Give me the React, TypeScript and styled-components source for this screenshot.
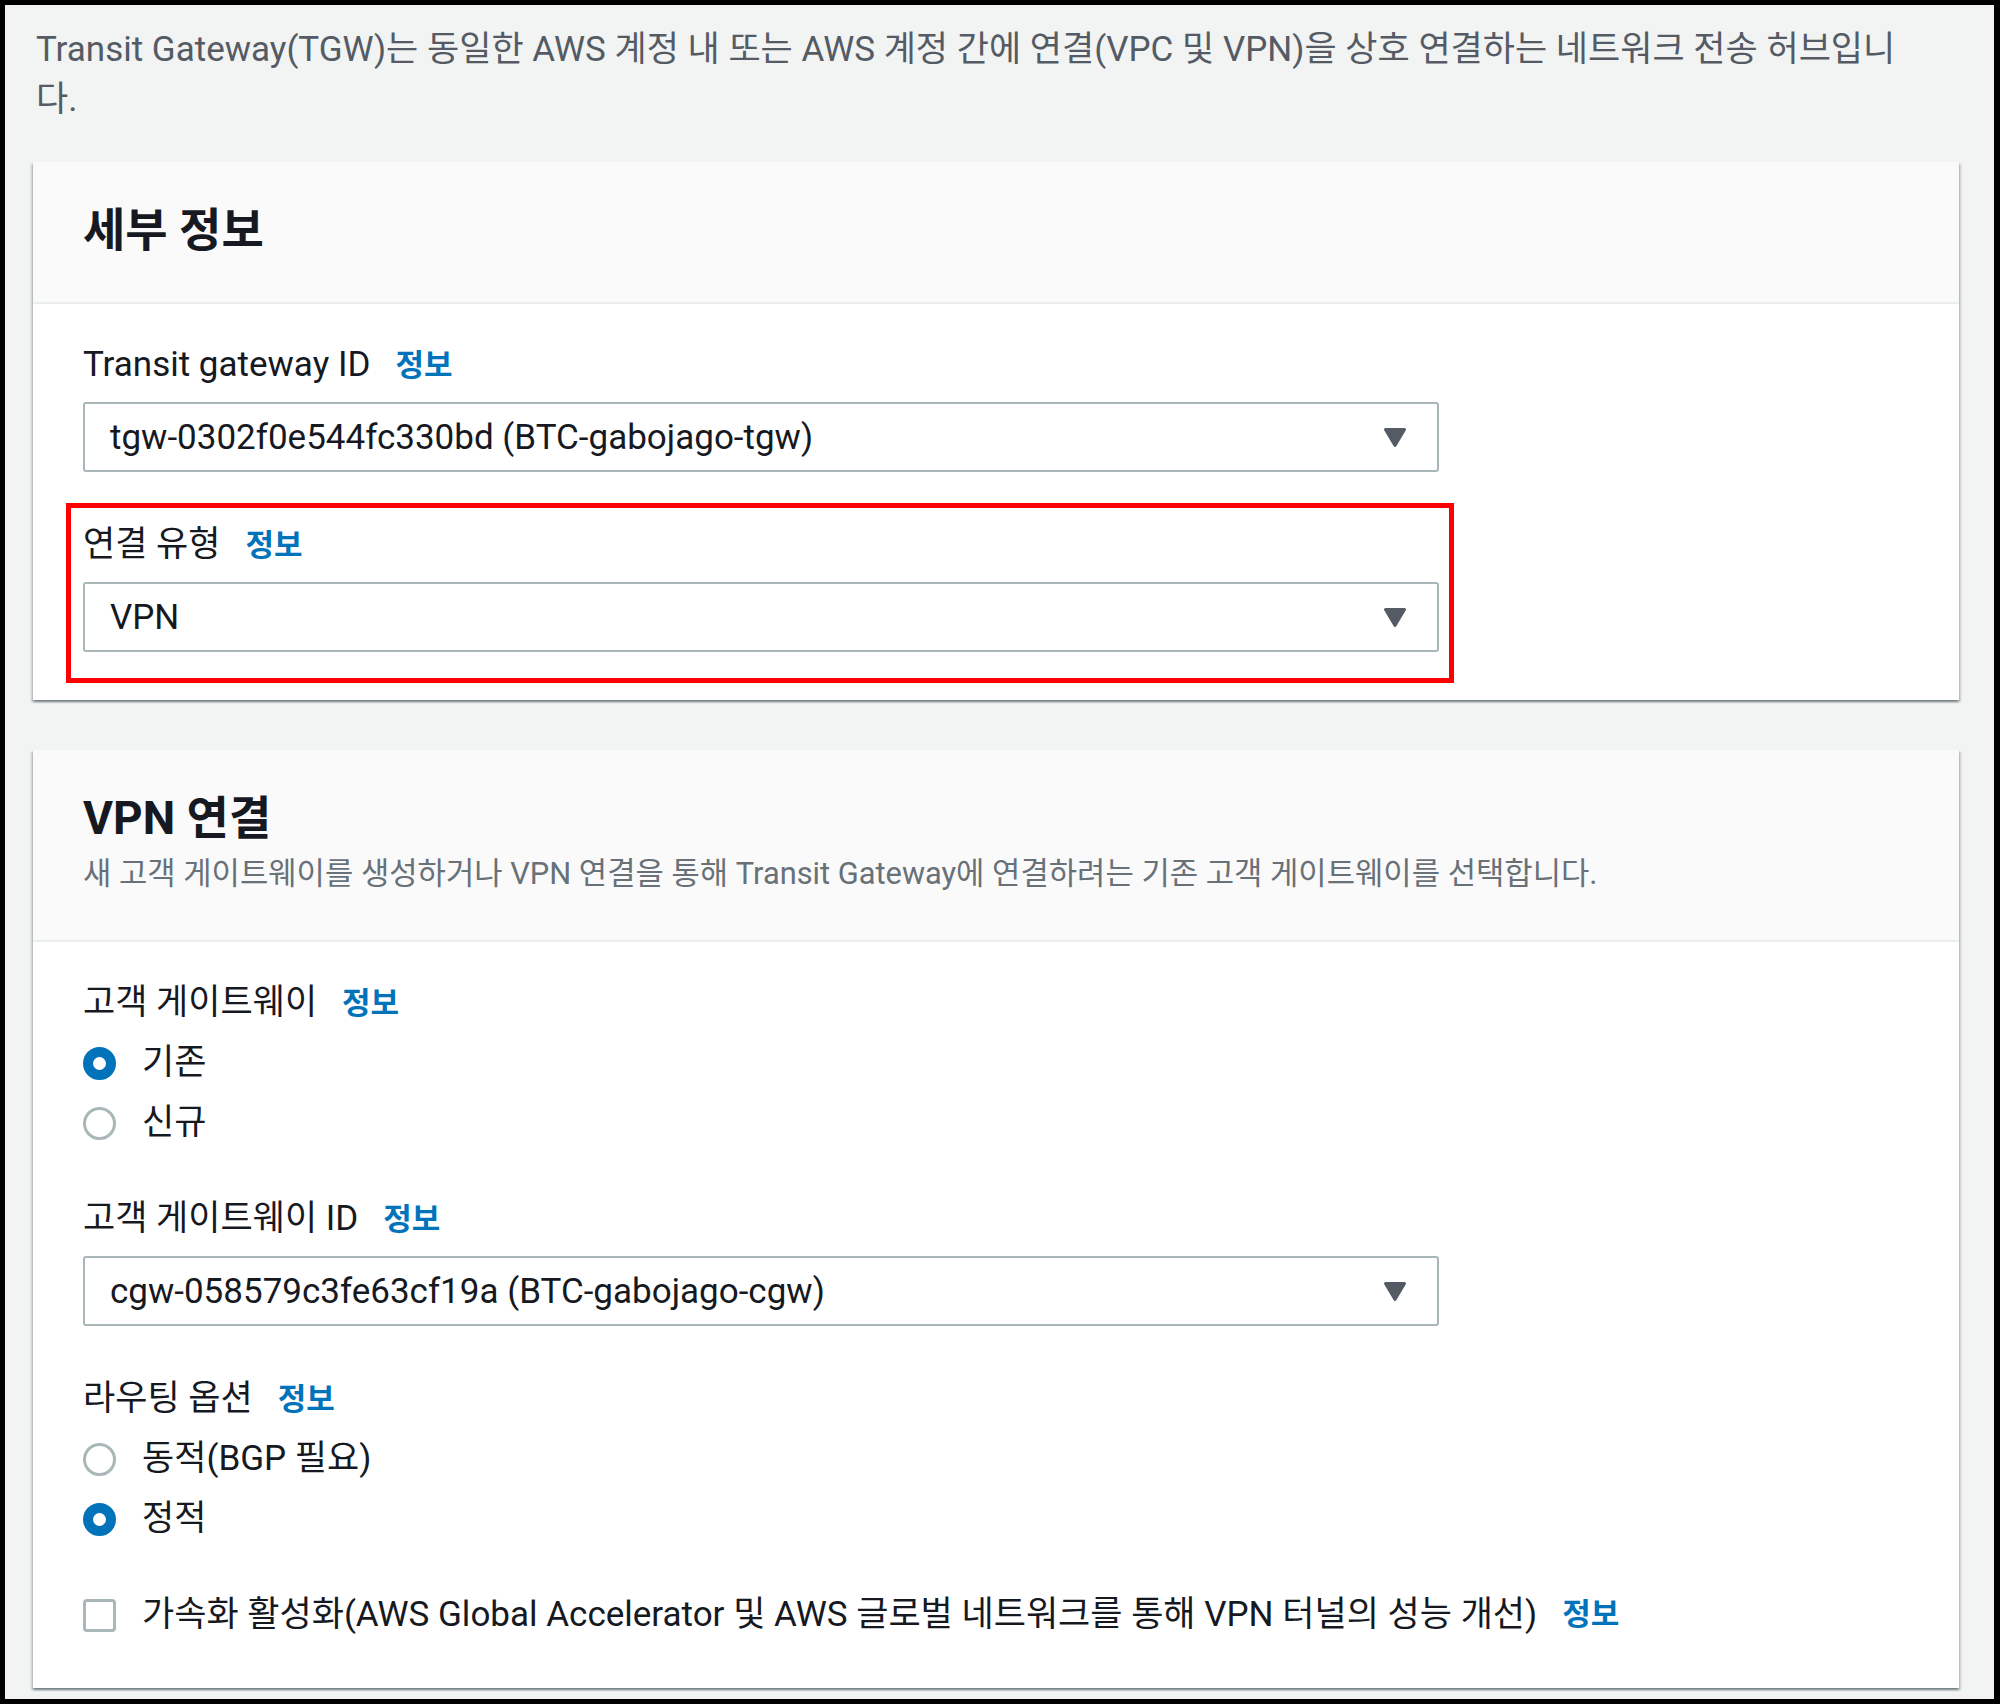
import React from "react";
import styled, { createGlobalStyle } from "styled-components";

const GlobalStyle = createGlobalStyle`
  html, body {
    margin: 0;
    padding: 0;
    background: #000;
  }
  body {
    font-family: Roboto, "Noto Sans CJK KR", sans-serif;
    color: #16191f;
  }
  * {
    box-sizing: border-box;
  }
`;

const Frame = styled.div`
  min-height: 100vh;
  border-style: solid;
  border-color: #000;
  border-width: 5px 6px 7px 5px;
  background: #f2f3f3;
  padding: 20px 35px 11px 28px;
  display: flex;
  flex-direction: column;
`;

const Intro = styled.p`
  margin: 0 0 37px;
  padding-left: 3px;
  max-width: 1880px;
  font-size: 35px;
  line-height: 50px;
  color: #545b64;
`;

const CardStack = styled.div`
  display: flex;
  flex-direction: column;
  gap: 50px;
`;

const Card = styled.section`
  background: #fff;
  box-shadow: 0 2px 2px 0 rgba(0, 28, 36, 0.35),
    2px 2px 2px 0 rgba(0, 28, 36, 0.15),
    -2px 2px 2px 0 rgba(0, 28, 36, 0.15);
`;

const CardHeader = styled.header`
  background: #fafafa;
  border-bottom: 2px solid #eaeded;
  padding: 42px 50px 46px;
`;

const Title = styled.h2`
  margin: 0;
  font-size: 46px;
  line-height: 52px;
  font-weight: 700;
  color: #16191f;
`;

const Description = styled.p`
  margin: 10px 0 0;
  font-size: 30.8px;
  line-height: 40px;
  color: #687078;
`;

const CardBody = styled.div<{ $bottom: number }>`
  padding: 38px 50px ${(p) => p.$bottom}px;
  display: flex;
  flex-direction: column;
  align-items: flex-start;
  gap: 50px;
`;

const Field = styled.div`
  display: flex;
  flex-direction: column;
  gap: 13px;
`;

const Label = styled.div`
  display: flex;
  align-items: baseline;
  font-size: 35px;
  line-height: 46px;
  color: #16191f;
`;

const InfoLink = styled.a`
  margin-left: 25px;
  font-size: 31px;
  font-weight: 700;
  color: #0073bb;
  text-decoration: none;
`;

const Select = styled.div`
  width: 1356px;
  height: 70px;
  border: 2px solid #aab7b8;
  border-radius: 3px;
  background: #fff;
  display: flex;
  align-items: center;
  justify-content: space-between;
  padding: 0 30px 0 25px;
  font-size: 35px;
  color: #16191f;
`;

const Highlight = styled.div`
  border: 5px solid #ff0000;
  margin: -19px 0 -31px -17px;
  padding: 14px 10px 26px 12px;
`;

const RadioGroup = styled.div`
  display: flex;
  flex-direction: column;
  gap: 14px;
`;

const OptionRow = styled.label`
  display: flex;
  align-items: center;
  font-size: 35px;
  line-height: 46px;
  color: #16191f;
`;

const RadioDot = styled.span<{ $checked?: boolean }>`
  flex-shrink: 0;
  width: 33px;
  height: 33px;
  margin-right: 26px;
  border-radius: 50%;
  background: #fff;
  border: ${(p) => (p.$checked ? "10px solid #0073bb" : "3px solid #aab7b8")};
`;

const CheckBox = styled.span`
  flex-shrink: 0;
  width: 33px;
  height: 33px;
  margin-right: 26px;
  border-radius: 4px;
  background: #fff;
  border: 3px solid #aab7b8;
`;

const CaretDown = () => (
  <svg width="24" height="21" viewBox="0 0 24 21">
    <polygon
      points="2.5,2.5 21.5,2.5 12,18.5"
      fill="#545b64"
      stroke="#545b64"
      strokeWidth="3"
      strokeLinejoin="round"
    />
  </svg>
);

const Info = () => <InfoLink href="#">정보</InfoLink>;

const App: React.FC = () => {
  return (
    <>
      <GlobalStyle />
      <Frame>
        <Intro>
          Transit Gateway(TGW)는 동일한 AWS 계정 내 또는 AWS 계정 간에 연결(VPC 및 VPN)을 상호 연결하는 네트워크 전송 허브입니다.
        </Intro>

        <CardStack>
          <Card>
            <CardHeader>
              <Title>세부 정보</Title>
            </CardHeader>
            <CardBody $bottom={48}>
              <Field>
                <Label>
                  Transit gateway ID
                  <Info />
                </Label>
                <Select>
                  <span>tgw-0302f0e544fc330bd (BTC-gabojago-tgw)</span>
                  <CaretDown />
                </Select>
              </Field>

              <Highlight>
                <Field>
                  <Label>
                    연결 유형
                    <Info />
                  </Label>
                  <Select>
                    <span>VPN</span>
                    <CaretDown />
                  </Select>
                </Field>
              </Highlight>
            </CardBody>
          </Card>

          <Card>
            <CardHeader>
              <Title>VPN 연결</Title>
              <Description>
                새 고객 게이트웨이를 생성하거나 VPN 연결을 통해 Transit Gateway에 연결하려는 기존 고객 게이트웨이를 선택합니다.
              </Description>
            </CardHeader>
            <CardBody $bottom={50}>
              <Field>
                <Label>
                  고객 게이트웨이
                  <Info />
                </Label>
                <RadioGroup>
                  <OptionRow>
                    <RadioDot $checked />
                    기존
                  </OptionRow>
                  <OptionRow>
                    <RadioDot />
                    신규
                  </OptionRow>
                </RadioGroup>
              </Field>

              <Field>
                <Label>
                  고객 게이트웨이 ID
                  <Info />
                </Label>
                <Select>
                  <span>cgw-058579c3fe63cf19a (BTC-gabojago-cgw)</span>
                  <CaretDown />
                </Select>
              </Field>

              <Field>
                <Label>
                  라우팅 옵션
                  <Info />
                </Label>
                <RadioGroup>
                  <OptionRow>
                    <RadioDot />
                    동적(BGP 필요)
                  </OptionRow>
                  <OptionRow>
                    <RadioDot $checked />
                    정적
                  </OptionRow>
                </RadioGroup>
              </Field>

              <OptionRow>
                <CheckBox />
                가속화 활성화(AWS Global Accelerator 및 AWS 글로벌 네트워크를 통해 VPN 터널의 성능 개선)
                <Info />
              </OptionRow>
            </CardBody>
          </Card>
        </CardStack>
      </Frame>
    </>
  );
};

export default App;
